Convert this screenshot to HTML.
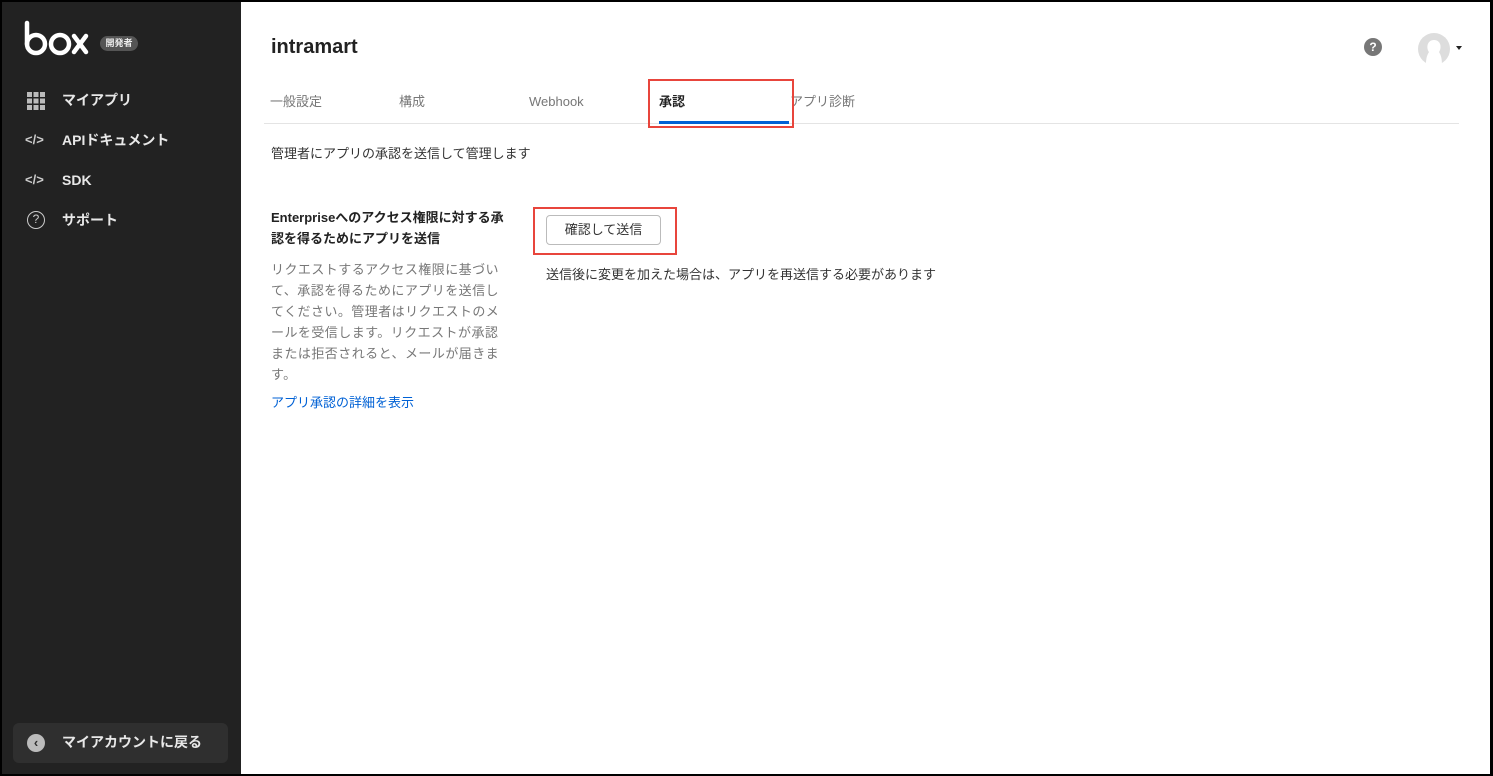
<!DOCTYPE html>
<html><head><meta charset="utf-8"><style>
*{margin:0;padding:0;box-sizing:border-box}
body{width:1493px;height:776px;overflow:hidden;background:#fff;font-family:"Liberation Sans","Noto Sans CJK JP",sans-serif;position:relative}
.frame{position:absolute;inset:0;border:2px solid #000;border-right-width:3px;pointer-events:none;z-index:10}
.side{position:absolute;left:0;top:0;width:241px;height:776px;background:#222}
.a{position:absolute;white-space:nowrap}
.nav{color:#e8e8e8;font-size:14px;font-weight:bold;line-height:20px}
.tab{font-size:13px;color:#777;top:92px;line-height:20px}
.red{position:absolute;border:2px solid #e8453c}
.desc{color:#777;font-size:13px;line-height:21px;width:236px;letter-spacing:0.45px;position:absolute;left:271px;top:259px}
</style></head><body>
<div class="side"></div>
<svg class="a" style="left:22px;top:20px" width="70" height="40" fill="none" stroke="#fff" stroke-width="4.5" stroke-linecap="round">
<line x1="5" y1="3" x2="5" y2="24"/>
<circle cx="14" cy="24" r="9"/>
<circle cx="38" cy="24" r="9"/>
<line x1="52" y1="16" x2="64" y2="32"/>
<line x1="64" y1="16" x2="52" y2="32"/>
</svg>
<div class="a" style="left:100px;top:36px;width:38px;height:15px;border-radius:8px;background:#555;color:#eee;font-size:9px;font-weight:bold;text-align:center;line-height:15px">開発者</div>
<svg class="a" style="left:27px;top:92px" width="18" height="18"><g fill="#bbb"><rect x="0" y="0" width="5" height="5"/><rect x="6.5" y="0" width="5" height="5"/><rect x="13" y="0" width="5" height="5"/><rect x="0" y="6.5" width="5" height="5"/><rect x="6.5" y="6.5" width="5" height="5"/><rect x="13" y="6.5" width="5" height="5"/><rect x="0" y="13" width="5" height="5"/><rect x="6.5" y="13" width="5" height="5"/><rect x="0" y="13" width="5" height="5"/><rect x="13" y="13" width="5" height="5"/></g></svg>
<div class="a nav" style="left:62px;top:90px">マイアプリ</div>
<div class="a nav" style="left:25px;top:130px;font-size:13px;color:#ccc">&lt;/&gt;</div>
<div class="a nav" style="left:62px;top:130px">APIドキュメント</div>
<div class="a nav" style="left:25px;top:170px;font-size:13px;color:#ccc">&lt;/&gt;</div>
<div class="a nav" style="left:62px;top:170px">SDK</div>
<div class="a" style="left:27px;top:211px;width:18px;height:18px;border:1.5px solid #ccc;border-radius:50%;color:#ccc;font-size:12px;text-align:center;line-height:15px">?</div>
<div class="a nav" style="left:62px;top:210px">サポート</div>
<div class="a" style="left:13px;top:723px;width:215px;height:40px;background:#2f2f2f;border-radius:6px"></div>
<div class="a" style="left:27px;top:734px;width:18px;height:18px;border-radius:50%;background:#bbb;color:#2f2f2f;font-size:13px;font-weight:bold;text-align:center;line-height:18px">‹</div>
<div class="a nav" style="left:62px;top:732px">マイアカウントに戻る</div>

<div class="a" style="left:271px;top:36px;font-size:20px;font-weight:bold;color:#222">intramart</div>
<div class="a" style="left:1364px;top:38px;width:18px;height:18px;border-radius:50%;background:#777;color:#fff;font-size:12px;font-weight:bold;text-align:center;line-height:18px">?</div>
<svg class="a" style="left:1417px;top:32px" width="34" height="34"><circle cx="17" cy="17" r="16" fill="#ddd"/><path d="M9 33 C9 24 11 22 12 20 C9 16 10 8 17 8 C24 8 25 16 22 20 C23 22 25 24 25 33Z" fill="#fff"/></svg>
<div class="a" style="left:1456px;top:46px;border-left:3px solid transparent;border-right:3px solid transparent;border-top:4px solid #222"></div>

<div class="a tab" style="left:270px">一般設定</div>
<div class="a tab" style="left:399px">構成</div>
<div class="a tab" style="left:529px">Webhook</div>
<div class="a tab" style="left:659px;color:#222;font-weight:bold">承認</div>
<div class="a tab" style="left:790px">アプリ診断</div>
<div class="a" style="left:264px;top:123px;width:1195px;height:1px;background:#e4e4e4"></div>
<div class="a" style="left:659px;top:121px;width:130px;height:3px;background:#0061d5"></div>
<div class="red" style="left:648px;top:79px;width:146px;height:49px"></div>

<div class="a" style="left:271px;top:143px;font-size:13px;color:#333">管理者にアプリの承認を送信して管理します</div>
<div class="a" style="left:271px;top:207px;font-size:13px;font-weight:bold;color:#222;line-height:21px;white-space:normal;width:240px">Enterpriseへのアクセス権限に対する承認を得るためにアプリを送信</div>
<div class="desc">リクエストするアクセス権限に基づいて、承認を得るためにアプリを送信してください。管理者はリクエストのメールを受信します。リクエストが承認または拒否されると、メールが届きます。</div>
<div class="a" style="left:271px;top:392px;font-size:13px;color:#0061d5">アプリ承認の詳細を表示</div>

<div class="a" style="left:546px;top:215px;width:115px;height:30px;border:1px solid #bbb;border-radius:4px;font-size:13px;color:#333;text-align:center;line-height:28px">確認して送信</div>
<div class="red" style="left:533px;top:207px;width:144px;height:48px"></div>
<div class="a" style="left:546px;top:264px;font-size:13px;color:#333">送信後に変更を加えた場合は、アプリを再送信する必要があります</div>
<div class="frame"></div>
</body></html>
